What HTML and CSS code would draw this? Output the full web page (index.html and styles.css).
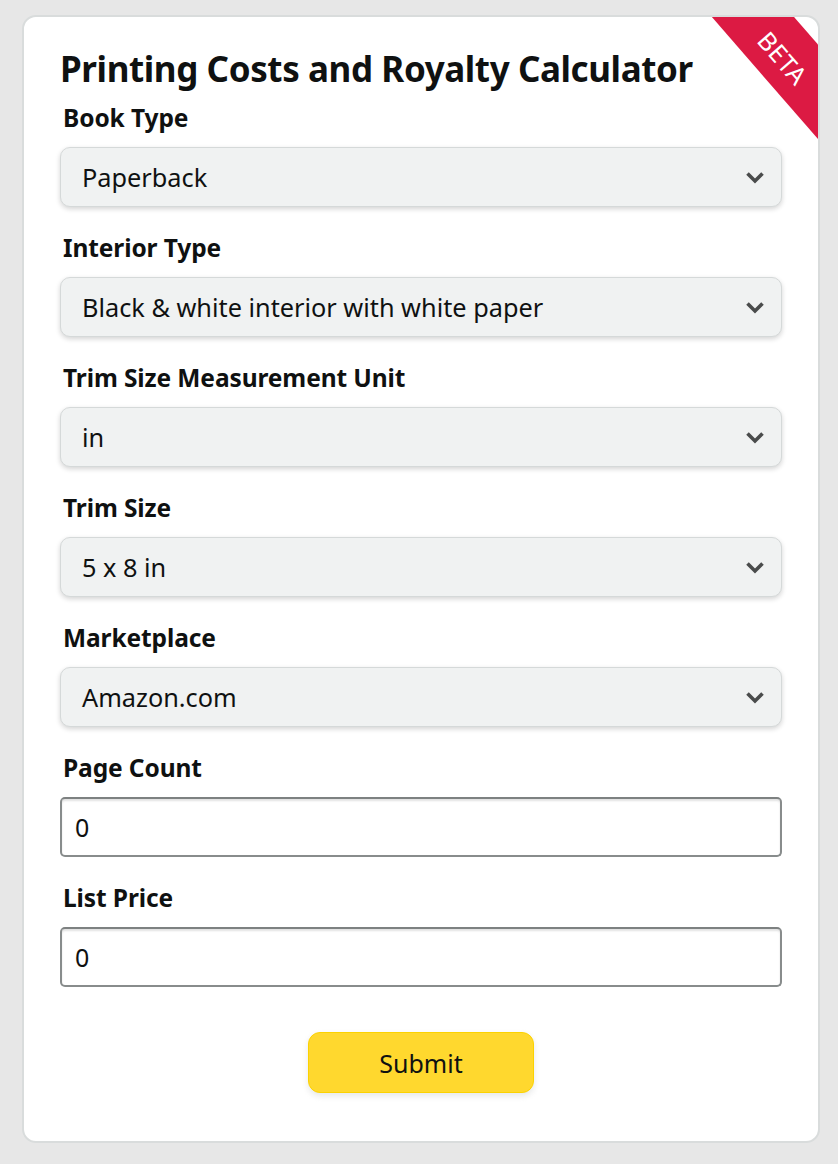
FILE: index.html
```html
<!DOCTYPE html>
<html lang="en">
<head>
<meta charset="utf-8">
<title>Printing Costs and Royalty Calculator</title>
<link rel="stylesheet" href="styles.css">
</head>
<body>
<div class="card">
  <div class="ribbon">BETA</div>
  <h1 class="title">Printing Costs and Royalty Calculator</h1>
  <form class="form">
    <div class="field">
      <label class="field-label">Book Type</label>
      <div class="dropdown"><span class="dropdown-text">Paperback</span><svg class="chev" width="20" height="13" viewBox="0 0 20 13"><polyline points="2.5,2.5 10,10 17.5,2.5" fill="none" stroke="#4a4c4c" stroke-width="3.6"/></svg></div>
    </div>
    <div class="field">
      <label class="field-label">Interior Type</label>
      <div class="dropdown"><span class="dropdown-text">Black &amp; white interior with white paper</span><svg class="chev" width="20" height="13" viewBox="0 0 20 13"><polyline points="2.5,2.5 10,10 17.5,2.5" fill="none" stroke="#4a4c4c" stroke-width="3.6"/></svg></div>
    </div>
    <div class="field">
      <label class="field-label">Trim Size Measurement Unit</label>
      <div class="dropdown"><span class="dropdown-text">in</span><svg class="chev" width="20" height="13" viewBox="0 0 20 13"><polyline points="2.5,2.5 10,10 17.5,2.5" fill="none" stroke="#4a4c4c" stroke-width="3.6"/></svg></div>
    </div>
    <div class="field">
      <label class="field-label">Trim Size</label>
      <div class="dropdown"><span class="dropdown-text">5 x 8 in</span><svg class="chev" width="20" height="13" viewBox="0 0 20 13"><polyline points="2.5,2.5 10,10 17.5,2.5" fill="none" stroke="#4a4c4c" stroke-width="3.6"/></svg></div>
    </div>
    <div class="field">
      <label class="field-label">Marketplace</label>
      <div class="dropdown"><span class="dropdown-text">Amazon.com</span><svg class="chev" width="20" height="13" viewBox="0 0 20 13"><polyline points="2.5,2.5 10,10 17.5,2.5" fill="none" stroke="#4a4c4c" stroke-width="3.6"/></svg></div>
    </div>
    <div class="field">
      <label class="field-label">Page Count</label>
      <input class="text-input" type="text" value="0">
    </div>
    <div class="field">
      <label class="field-label">List Price</label>
      <input class="text-input" type="text" value="0">
    </div>
    <div class="actions">
      <button class="submit" type="button">Submit</button>
    </div>
  </form>
</div>
</body>
</html>
```

FILE: styles.css
```css
html, body {
  margin: 0;
  padding: 0;
}
body {
  background: #e7e7e7;
  font-family: "Noto Sans", "Open Sans", Arial, sans-serif;
  color: #0f1111;
  padding: 15px 18px 23px 22px;
}
.card {
  position: relative;
  overflow: hidden;
  box-sizing: border-box;
  width: 798px;
  background: #ffffff;
  border: 2px solid #d9dcdc;
  border-radius: 14px;
  padding: 32px 36px 48px 36px;
}
.ribbon {
  position: absolute;
  left: 612px;
  top: 7px;
  width: 300px;
  height: 62px;
  background: #dc1a43;
  color: #ffffff;
  font-size: 25px;
  line-height: 70px;
  text-align: center;
  letter-spacing: 0.5px;
  transform: rotate(49deg);
}
.title {
  margin: 0;
  font-size: 35px;
  line-height: 40px;
  font-weight: 700;
  letter-spacing: -0.4px;
}
.form {
  display: flex;
  flex-direction: column;
  gap: 27px;
  margin-top: 15px;
}
.field {
  display: flex;
  flex-direction: column;
  gap: 15px;
}
.field-label {
  font-size: 24.5px;
  line-height: 28px;
  font-weight: 700;
  padding-left: 3px;
  letter-spacing: -0.1px;
}
.dropdown {
  box-sizing: border-box;
  height: 60px;
  display: flex;
  align-items: center;
  justify-content: space-between;
  padding: 0 16px 0 21px;
  background: #f0f2f2;
  border: 1px solid #d5d9d9;
  border-radius: 10px;
  box-shadow: 0 2px 5px rgba(15, 17, 17, 0.18);
}
.dropdown-text {
  font-size: 25.3px;
  line-height: 30px;
}
.chev {
  display: block;
  margin-top: 1px;
}
.text-input {
  box-sizing: border-box;
  width: 100%;
  height: 60px;
  margin: 0;
  padding: 0 13px;
  font-family: inherit;
  font-size: 25px;
  color: #0f1111;
  background: #ffffff;
  border: 2px solid #888c8c;
  border-top-color: #7d8181;
  border-radius: 5px;
  box-shadow: inset 0 2px 2px rgba(15, 17, 17, 0.12);
  outline: none;
}
.actions {
  display: flex;
  justify-content: center;
  margin-top: 18px;
}
.submit {
  box-sizing: border-box;
  width: 226px;
  height: 61px;
  font-family: inherit;
  font-size: 25px;
  color: #0f1111;
  background: #ffd82e;
  border: 1px solid #fcd200;
  border-radius: 12px;
  box-shadow: 0 3px 6px rgba(213, 217, 217, 0.6);
  padding: 0;
}
```
